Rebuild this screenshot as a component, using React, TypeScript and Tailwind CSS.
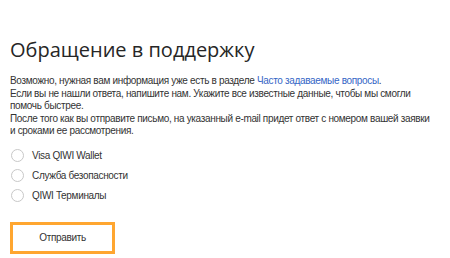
import React from "react";

const body = { fontFamily: '"Liberation Sans", Arial, sans-serif', letterSpacing: "-0.33px" };

export default function App() {
  const options = ["Visa QIWI Wallet", "Служба безопасности", "QIWI Терминалы"];
  return (
    <div className="w-[450px] h-[258px] bg-white overflow-hidden pl-[10px] pr-[16px] pt-[36px] text-[#333]" style={{ fontFamily: '"Open Sans", sans-serif' }}>
      <h1 className="text-[20px] leading-[28px] font-normal text-[#262626]">Обращение в поддержку</h1>
      <div className="mt-[11px] text-[10px] leading-[12.6px] text-[#333]" style={body}>
        <p>
          Возможно, нужная вам информация уже есть в разделе{" "}
          <span className="text-[#3566c6]">Часто задаваемые вопросы</span>.
        </p>
        <p>Если вы не нашли ответа, напишите нам. Укажите все известные данные, чтобы мы смогли помочь быстрее.</p>
        <p>После того как вы отправите письмо, на указанный e-mail придет ответ с номером вашей заявки и сроками ее рассмотрения.</p>
      </div>
      <div className="mt-[11px] flex flex-col gap-[7px]" style={body}>
        {options.map((o) => (
          <label key={o} className="flex items-center h-[13px] text-[10px] text-[#333]">
            <span className="w-[13px] h-[13px] rounded-full border-[1.5px] border-[#c8c8c8] ml-[1px] mr-[8px] shrink-0" />
            {o}
          </label>
        ))}
      </div>
      <button className="mt-[20px] w-[105px] h-[32px] border-[3px] border-[#ffa630] bg-white text-[10px] text-[#333]" style={body}>
        Отправить
      </button>
    </div>
  );
}
